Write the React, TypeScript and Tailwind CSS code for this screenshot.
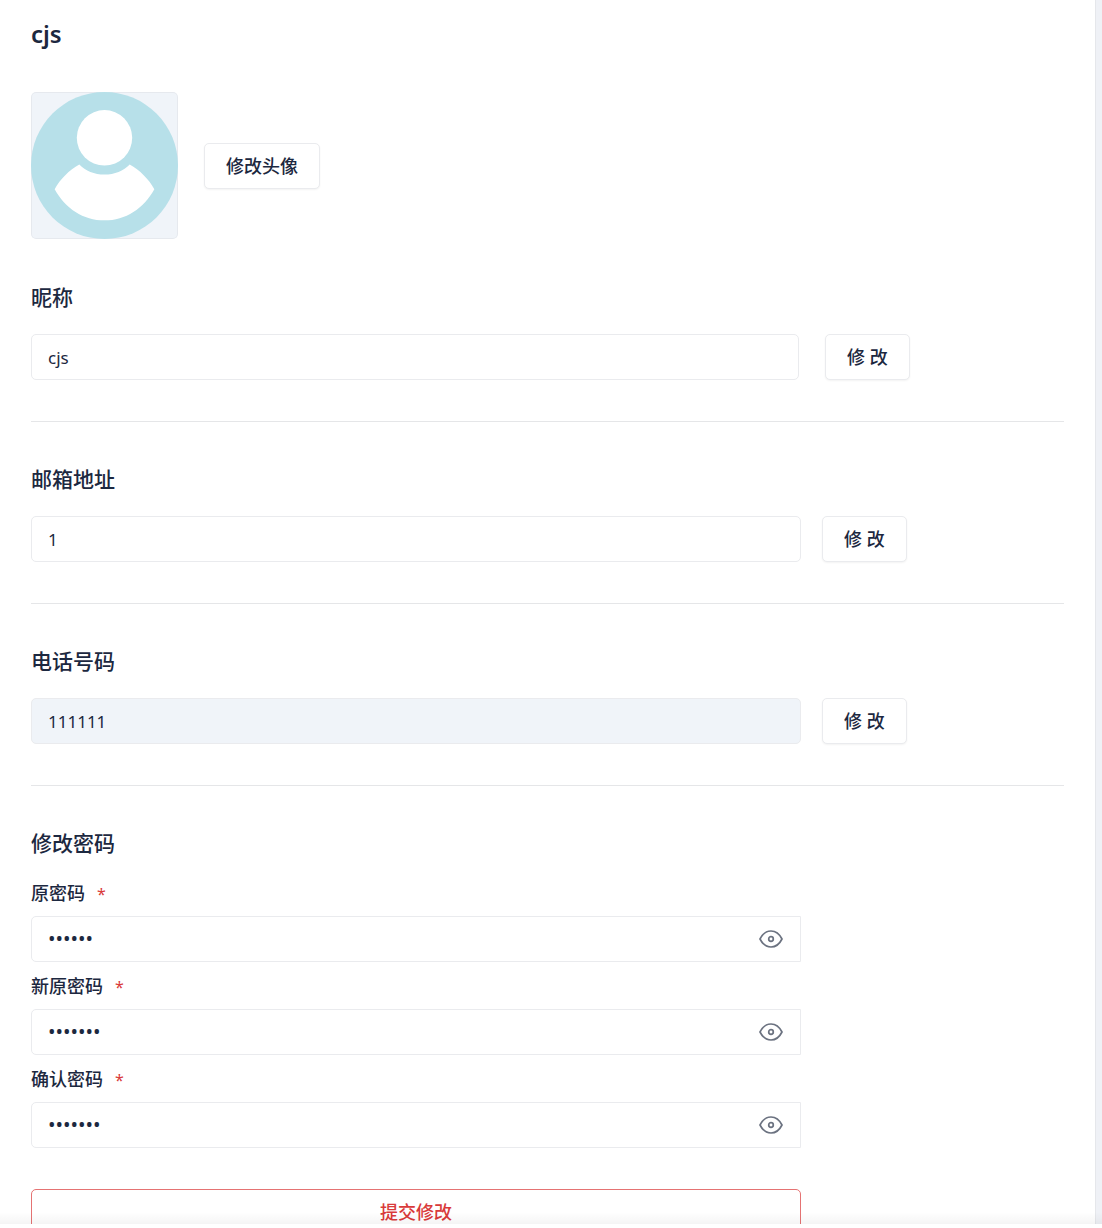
import { useState } from "react";

const fields = [
  { id: "nickname", label: "昵称", value: "cjs", gap: "gap-[26px]", width: "max-w-[768px]", tone: "bg-white" },
  { id: "email", label: "邮箱地址", value: "1", gap: "gap-[21px]", width: "max-w-[770px]", tone: "bg-white" },
  { id: "phone", label: "电话号码", value: "111111", gap: "gap-[21px]", width: "max-w-[770px]", tone: "bg-[#f0f4f9]" },
];

const passwords = [
  { id: "old-password", label: "原密码", value: "123456" },
  { id: "new-password", label: "新原密码", value: "1234567" },
  { id: "confirm-password", label: "确认密码", value: "1234567" },
];

const buttonClass =
  "h-[46px] shrink-0 rounded-[5px] border border-[#eaebee] bg-white px-[21px] text-lg font-medium whitespace-nowrap shadow-xs";

function Avatar() {
  return (
    <div className="size-[147px] overflow-hidden rounded-[5px] bg-[#f0f4f9]">
      <svg viewBox="0 0 146 146" className="size-full" aria-hidden="true">
        <rect x="0.5" y="0.5" width="145" height="145" rx="4.5" fill="none" stroke="#e6e9ee" />
        <circle cx="73" cy="73" r="73" fill="#b7e0e9" />
        <circle cx="73" cy="45.5" r="27.5" fill="#fff" />
        <path
          d="M48 72C38 77.500 29 86.500 23.500 96.500C34 115.500 52 127.500 73 127.500S112 115.500 122.500 96.500C117 86.500 108 77.500 98 72C92 78.500 83 82 73 82S54 78.500 48 72Z"
          fill="#fff"
        />
      </svg>
    </div>
  );
}

function EyeIcon() {
  return (
    <svg viewBox="0 0 24 20" className="h-5 w-6" fill="none" stroke="#6b7280" strokeWidth="1.7" strokeLinejoin="round" aria-hidden="true">
      <path d="M1 10C3.500 5 7.300 2 12 2S20.500 5 23 10C20.500 15 16.700 18 12 18S3.500 15 1 10Z" />
      <circle cx="12" cy="10" r="2.300" />
    </svg>
  );
}

function PasswordField({ id, label, value }: { id: string; label: string; value: string }) {
  const [visible, setVisible] = useState(false);

  return (
    <div>
      <label htmlFor={id} className="block text-lg leading-7 font-medium">
        {label}
        <span className="ml-3 text-base font-normal text-[#d93a3a]">*</span>
      </label>
      <div className="mt-[9px] flex h-[46px] rounded-l-[5px] border border-[#eaebee] bg-white">
        <input
          id={id}
          type={visible ? "text" : "password"}
          defaultValue={value}
          className="min-w-0 flex-1 bg-transparent pl-4 text-xl outline-none"
        />
        <button type="button" aria-label={label} onClick={() => setVisible(!visible)} className="px-[17px]">
          <EyeIcon />
        </button>
      </div>
    </div>
  );
}

export default function App() {
  return (
    <div className="h-screen bg-white pb-1 font-['Noto_Sans','Noto_Sans_CJK_SC',sans-serif] text-[#1c2840]">
      <div className="relative flex h-full overflow-hidden">
        <main className="min-w-0 flex-1 px-[31px]">
          <h1 className="pt-[18px] text-2xl leading-8 font-semibold">cjs</h1>

          <div className="mt-[42px] flex items-center gap-[26px]">
            <Avatar />
            <button type="button" className={buttonClass}>
              修改头像
            </button>
          </div>

          <div className="mt-[42px]">
            {fields.map((field) => (
              <section key={field.id} className="mb-[41px] border-b border-[#e5e6e8] pb-[41px]">
                <label htmlFor={field.id} className="block text-[21px] leading-8 font-medium">
                  {field.label}
                </label>
                <div className={`mt-[21px] flex ${field.gap}`}>
                  <input
                    id={field.id}
                    type="text"
                    defaultValue={field.value}
                    className={`h-[46px] w-full min-w-0 rounded-[5px] border border-[#eaebee] px-4 text-[17px] outline-none ${field.width} ${field.tone}`}
                  />
                  <button type="button" className={buttonClass}>
                    修 改
                  </button>
                </div>
              </section>
            ))}
          </div>

          <form className="max-w-[770px]" onSubmit={(e) => e.preventDefault()}>
            <h2 className="text-[21px] leading-8 font-medium">修改密码</h2>
            <div className="mt-5 space-y-[10px]">
              {passwords.map((item) => (
                <PasswordField key={item.id} {...item} />
              ))}
            </div>
            <button
              type="submit"
              className="mt-[41px] h-[46px] w-full rounded-[5px] border border-[#e57373] bg-white text-lg font-medium text-[#d93a3a]"
            >
              提交修改
            </button>
          </form>
        </main>
        <div className="w-[7px] shrink-0 border-l border-[#e5e7eb] bg-[#eff1f6]" />
        <div className="pointer-events-none absolute inset-x-0 bottom-0 h-3 bg-linear-to-b from-transparent to-black/4" />
      </div>
    </div>
  );
}
